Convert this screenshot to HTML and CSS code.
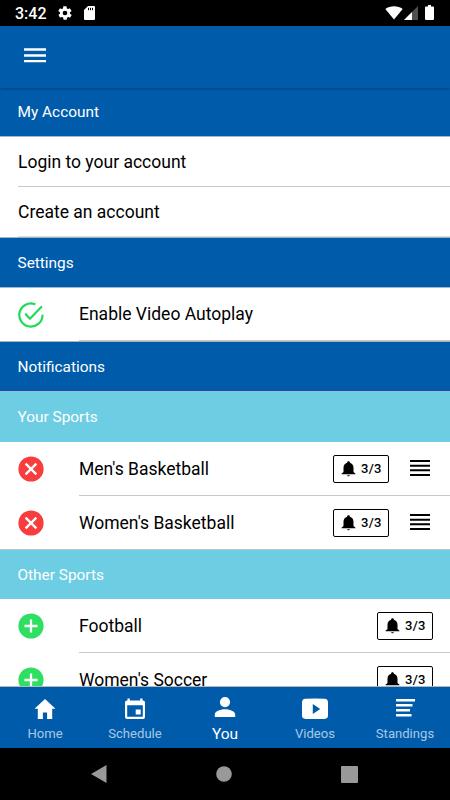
FILE: index.html
```html
<!DOCTYPE html>
<html lang="en">
    <head>
        <meta charset="utf-8" />
        <title>My Account</title>
        <link rel="stylesheet" href="styles.css">
    </head>
    <body>
        <svg class="defs">
            <symbol id="bell" viewBox="0 0 24 24">
                <path d="M12 23c1.100 0 2-.8 2-1.800h-4c0 1 .9 1.800 2 1.800zM19.500 16.500V10c0-3.500-2-6.300-5.500-7.200V2c0-1-.9-1.800-2-1.800s-2 .8-2 1.800v.8C6.500 3.700 4.500 6.500 4.500 10v6.500L1.500 19v1h21v-1z"/>
            </symbol>
            <symbol id="remove" viewBox="0 0 26 26">
                <circle cx="13" cy="13" r="12.600" fill="#f93c3e"/>
                <path d="M7.600 7.600l10.800 10.800M18.400 7.600L7.600 18.400" stroke="#fff" stroke-width="2.300"/>
            </symbol>
            <symbol id="add" viewBox="0 0 26 26">
                <circle cx="13" cy="13" r="12.600" fill="#2fdf62"/>
                <path d="M13 6.500v13M6.500 13h13" stroke="#fff" stroke-width="2.300"/>
            </symbol>
        </svg>
        <div class="status">
            <span class="time">3:42</span>
            <svg class="gear" width="16" height="16" viewBox="0 0 24 24"><path fill="#fff" d="M19.400 13c0-.3.100-.6.100-1s0-.7-.1-1l2.100-1.600c.2-.2.200-.4.100-.6l-2-3.500c-.1-.2-.4-.3-.6-.2l-2.500 1c-.5-.4-1.100-.7-1.700-1l-.4-2.600c0-.3-.2-.5-.5-.5h-4c-.2 0-.4.200-.5.400l-.4 2.700c-.6.200-1.100.6-1.700 1l-2.500-1c-.2-.1-.5 0-.6.200l-2 3.500c-.1.200-.1.500.1.600L4.600 11c0 .3-.1.700-.1 1s0 .7.100 1l-2.100 1.600c-.2.200-.3.400-.1.600l2 3.500c.1.200.4.300.6.200l2.500-1c.5.400 1.100.7 1.700 1l.4 2.600c0 .3.200.5.500.5h4c.2 0 .5-.2.500-.4l.4-2.700c.6-.2 1.200-.6 1.700-1l2.500 1c.2.100.5 0 .6-.2l2-3.500c.1-.2.100-.4-.1-.6zM12 15.500a3.500 3.500 0 1 1 0-7 3.500 3.500 0 0 1 0 7z"/></svg>
            <svg class="card" width="11" height="14" viewBox="0 0 11 14"><path fill="#fff" d="M4 0h6a1 1 0 0 1 1 1v12a1 1 0 0 1-1 1H1a1 1 0 0 1-1-1V4z"/><path d="M4.500 1.800v2.400M6.500 1.800v2.400M8.500 1.800v2.400" stroke="#000"/></svg>
            <svg class="wifi" width="18" height="14" viewBox="0 0 18 14"><path fill="#fff" d="M0.300 3C5 -.8 13 -.8 17.700 3L9 13.500z"/></svg>
            <svg class="signal" width="14" height="14" viewBox="0 0 14 14"><path fill="#505050" d="M0 14L14 0v14z"/><path fill="#fff" d="M0 14L8 6v8z"/></svg>
            <svg class="battery" width="9" height="15" viewBox="0 0 9 15"><path fill="#fff" d="M3 0h3v1.500h2a1 1 0 0 1 1 1V14a1 1 0 0 1-1 1H1a1 1 0 0 1-1-1V2.500a1 1 0 0 1 1-1h2z"/></svg>
        </div>
        <div class="toolbar">
            <svg width="22" height="15" viewBox="0 0 22 15"><path d="M0 1.500h22M0 7.500h22M0 13.200h22" stroke="#fff" stroke-width="2.300"/></svg>
        </div>
        <div class="content">
            <div class="divider">My Account</div>
            <div class="item account"><div class="inner">Login to your account</div></div>
            <div class="item account last"><div class="inner">Create an account</div></div>
            <div class="divider settings">Settings</div>
            <div class="item autoplay">
                <svg class="icon" viewBox="0 0 26 26" fill="none" stroke="#1edb59" stroke-width="2.200" stroke-linecap="round" stroke-linejoin="round"><path d="M24.500 13.500A11.600 11.600 0 1 1 16.500 2"/><path d="M7.800 12.200l4.100 4.600L23.300 5"/></svg>
                <div class="inner">Enable Video Autoplay</div>
            </div>
            <div class="divider notifications">Notifications</div>
            <div class="divider sub">Your Sports</div>
            <div class="item">
                <svg class="icon"><use href="#remove"/></svg>
                <div class="inner">
                    <span class="label">Men's Basketball</span>
                    <div class="count"><svg><use href="#bell"/></svg>3/3</div>
                    <svg class="reorder" viewBox="0 0 20 16"><path d="M0 1h20M0 5.700h20M0 10.300h20M0 15h20" stroke="#000" stroke-width="1.900"/></svg>
                </div>
            </div>
            <div class="item last">
                <svg class="icon"><use href="#remove"/></svg>
                <div class="inner">
                    <span class="label">Women's Basketball</span>
                    <div class="count"><svg><use href="#bell"/></svg>3/3</div>
                    <svg class="reorder" viewBox="0 0 20 16"><path d="M0 1h20M0 5.700h20M0 10.300h20M0 15h20" stroke="#000" stroke-width="1.900"/></svg>
                </div>
            </div>
            <div class="divider sub other">Other Sports</div>
            <div class="item">
                <svg class="icon"><use href="#add"/></svg>
                <div class="inner">
                    <span class="label">Football</span>
                    <div class="count"><svg><use href="#bell"/></svg>3/3</div>
                </div>
            </div>
            <div class="item">
                <svg class="icon"><use href="#add"/></svg>
                <div class="inner">
                    <span class="label">Women's Soccer</span>
                    <div class="count"><svg><use href="#bell"/></svg>3/3</div>
                </div>
            </div>
        </div>
        <div class="tabs">
            <div class="tab">
                <svg viewBox="0 0 26 26"><path fill="#fff" d="M13 3L2.500 12.700h3.300V23h5.100v-6.500h4.200V23h5.100V12.700h3.300z"/></svg>
                <span>Home</span>
            </div>
            <div class="tab">
                <svg viewBox="0 0 26 26"><path fill="#fff" fill-rule="evenodd" d="M5.500 2.500h2.300V4.500h10.400V2.500h2.300V4.500h.5a2 2 0 0 1 2 2V21a2 2 0 0 1-2 2H5a2 2 0 0 1-2-2V6.500a2 2 0 0 1 2-2h.5zM5.200 9.300V20.800h15.600V9.300zM13.700 13.500h5v5h-5z"/></svg>
                <span>Schedule</span>
            </div>
            <div class="tab active">
                <svg viewBox="0 0 26 26"><path fill="#fff" d="M13 12.200a5.100 5.100 0 1 0 0-10.200 5.100 5.100 0 0 0 0 10.200zM13 14.300c-3.500 0-10.200 1.700-10.200 5.100V22h20.400v-2.600c0-3.400-6.700-5.100-10.200-5.100z"/></svg>
                <span>You</span>
            </div>
            <div class="tab">
                <svg viewBox="0 0 26 26"><path fill="#fff" fill-rule="evenodd" d="M3.500 2.800Q13 2.300 22.500 2.800Q26 3 26 6.500V19.500Q26 22.700 22.500 22.900Q13 23.300 3.500 22.900Q0 22.700 0 19.500V6.500Q0 3 3.500 2.800zM10.800 8v10l7.400-5z"/></svg>
                <span>Videos</span>
            </div>
            <div class="tab">
                <svg viewBox="0 0 26 26"><path d="M4 4.200h19M4 9.300h16.500M4 14.200h14M4 19.300h15.500" stroke="#fff" stroke-width="2.500"/></svg>
                <span>Standings</span>
            </div>
        </div>
        <div class="navbar">
            <svg width="16" height="18" viewBox="0 0 16 18"><path fill="#999" d="M15.500 0v18L0 9z"/></svg>
            <svg width="16" height="16" viewBox="0 0 16 16"><circle cx="8" cy="8" r="7.800" fill="#999"/></svg>
            <svg width="17" height="17" viewBox="0 0 17 17"><rect width="17" height="17" rx="1" fill="#999"/></svg>
        </div>
    </body>
</html>
```
FILE: styles.css
```css
*{
    box-sizing: border-box;
}

body{
    width: 450px;
    height: 800px;
    margin: 0;
    display: flex;
    flex-direction: column;
    overflow: hidden;
    background-color: #fff;
    color: #000;
    font-family: Roboto, sans-serif;
}

svg{
    display: block;
    flex-shrink: 0;
}

.defs{
    display: none;
}

.status{
    height: 26px;
    padding: 0 16px 0 15px;
    display: flex;
    flex-shrink: 0;
    align-items: center;
    background-color: #000;
    color: #fff;
}

.time{
    width: 42px;
    padding-top: 1px;
    font-size: 16px;
    font-weight: 500;
}

.card{
    margin-left: 11px;
}

.wifi{
    margin-left: auto;
}

.signal{
    margin-left: 1px;
}

.battery{
    margin-left: 7px;
    margin-bottom: 1px;
}

.toolbar{
    position: relative;
    height: 62px;
    padding: 0 24px 3px;
    display: flex;
    flex-shrink: 0;
    align-items: center;
    background-color: #005cab;
    box-shadow: 0 1px 3px rgba(0,0,0,.3);
}

.content{
    flex: 1;
    min-height: 0;
    overflow: hidden;
}

.divider{
    height: 49px;
    padding-left: 17.500px;
    border-bottom: 1px solid #a5b8c8;
    background-color: #005cab;
    color: #fff;
    font-size: 15.400px;
    line-height: 48px;
}

.settings{
    height: 51px;
    border-top: 1px solid #a5b3bc;
    line-height: 50px;
}

.notifications{
    height: 51px;
    border-top: 1px solid #a5b3bc;
    line-height: 50px;
}

.sub{
    height: 50px;
    border-bottom: 0;
    background-color: #6dcde3;
    line-height: 50px;
}

.other{
    border-top: 1px solid #b9c5c8;
}

.item{
    height: 54px;
    padding-left: 18px;
    display: flex;
    align-items: center;
    font-size: 17.500px;
}

.icon{
    width: 26px;
    height: 26px;
    margin-right: 35px;
}

.inner{
    flex: 1;
    height: 100%;
    padding-right: 17px;
    display: flex;
    align-items: center;
    border-bottom: 1px solid #c8c8c8;
}

.account{
    height: 50px;
}

.autoplay{
    height: 53px;
}

.last:not(.account){
    height: 53px;
}

.last .inner{
    border-bottom-color: #d8dcdf;
}

.last:not(.account) .inner{
    border-bottom: 0;
}

.label{
    flex: 1;
}

.count{
    width: 56px;
    height: 28px;
    padding-left: 6px;
    display: flex;
    align-items: center;
    border: 1px solid #000;
    border-radius: 2px;
    font-size: 13px;
    font-weight: 500;
    letter-spacing: .3px;
}

.count svg{
    width: 17px;
    height: 16px;
    margin-right: 4px;
}

.reorder{
    width: 20px;
    height: 16px;
    margin: 0 3px 2px 21px;
}

.tabs{
    position: relative;
    height: 61px;
    display: flex;
    flex-shrink: 0;
    background-color: #005cab;
    box-shadow: 0 -1px 0 #b0b8c0;
}

.tab{
    flex: 1;
    padding-top: 9px;
    display: flex;
    flex-direction: column;
    align-items: center;
    color: #a9c8e3;
    font-size: 13.100px;
    line-height: 24px;
}

.tab svg{
    width: 26px;
    height: 26px;
}

.active{
    padding-top: 8px;
    color: #fff;
    font-size: 15.500px;
    line-height: 26px;
}

.navbar{
    height: 52px;
    padding: 0 92px 0 91px;
    display: flex;
    flex-shrink: 0;
    align-items: center;
    justify-content: space-between;
    background-color: #000;
}
```
